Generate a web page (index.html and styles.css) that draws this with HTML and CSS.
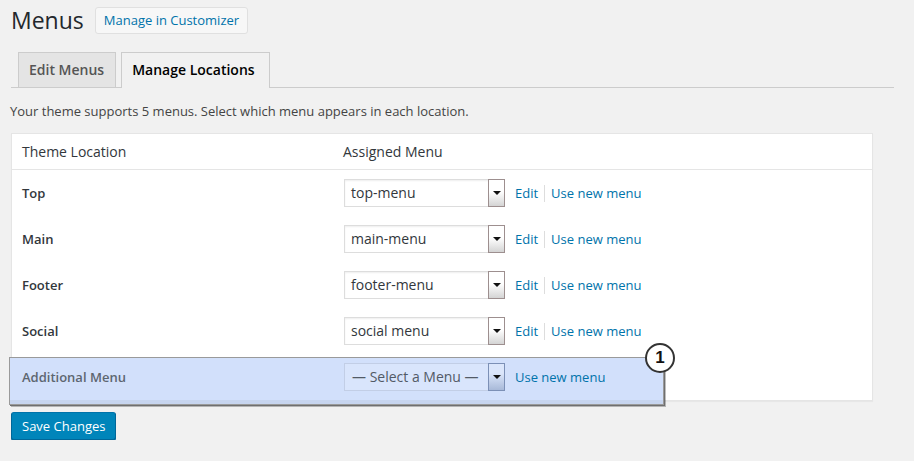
FILE: index.html
```html
<!DOCTYPE html>
<html>
<head>
<meta charset="utf-8">
<link rel="stylesheet" href="styles.css">
</head>
<body>
<div class="wrap">
  <div class="page-head">
    <h1 class="page-title">Menus</h1>
    <a class="btn-secondary">Manage in Customizer</a>
  </div>
  <div class="tabs">
    <a class="tab">Edit Menus</a>
    <a class="tab tab-active">Manage Locations</a>
  </div>
  <p class="desc">Your theme supports 5 menus. Select which menu appears in each location.</p>
  <div class="locations">
    <div class="row row-head">
      <div class="cell-name">Theme Location</div>
      <div class="cell-menu">Assigned Menu</div>
    </div>
    <div class="row">
      <div class="cell-name label">Top</div>
      <div class="cell-menu">
        <div class="select"><span class="select-text">top-menu</span><span class="select-arrow"></span></div>
        <a class="link">Edit</a><span class="sep"></span><a class="link">Use new menu</a>
      </div>
    </div>
    <div class="row">
      <div class="cell-name label">Main</div>
      <div class="cell-menu">
        <div class="select"><span class="select-text">main-menu</span><span class="select-arrow"></span></div>
        <a class="link">Edit</a><span class="sep"></span><a class="link">Use new menu</a>
      </div>
    </div>
    <div class="row">
      <div class="cell-name label">Footer</div>
      <div class="cell-menu">
        <div class="select"><span class="select-text">footer-menu</span><span class="select-arrow"></span></div>
        <a class="link">Edit</a><span class="sep"></span><a class="link">Use new menu</a>
      </div>
    </div>
    <div class="row">
      <div class="cell-name label">Social</div>
      <div class="cell-menu">
        <div class="select"><span class="select-text">social menu</span><span class="select-arrow"></span></div>
        <a class="link">Edit</a><span class="sep"></span><a class="link">Use new menu</a>
      </div>
    </div>
    <div class="row row-highlight">
      <div class="cell-name label">Additional Menu</div>
      <div class="cell-menu">
        <div class="select"><span class="select-text">— Select a Menu —</span><span class="select-arrow"></span></div>
        <a class="link">Use new menu</a>
      </div>
      <span class="badge">1</span>
    </div>
  </div>
  <a class="btn-primary">Save Changes</a>
</div>
</body>
</html>
```
FILE: styles.css
```css
html, body {
  margin: 0;
  padding: 0;
}
body {
  background: #f1f1f1;
  font-family: "Open Sans", "Liberation Sans", sans-serif;
  color: #444;
  font-size: 13px;
}
.wrap {
  padding: 7px 20px 0 11px;
}
.page-head {
  display: flex;
  align-items: center;
  height: 27px;
}
.page-title {
  margin: 0 11px 0 0;
  font-size: 23px;
  font-weight: 400;
  line-height: 27px;
  color: #23282d;
}
.btn-secondary {
  display: inline-block;
  box-sizing: border-box;
  height: 27px;
  line-height: 25px;
  padding: 0 8px;
  font-size: 13px;
  font-weight: 400;
  color: #0073aa;
  background: #f7f7f7;
  border: 1px solid #e0e0e0;
  border-radius: 3px;
}
.tabs {
  display: flex;
  margin-top: 18px;
  padding-left: 7px;
  border-bottom: 1px solid #ccc;
  height: 35px;
}
.tab {
  display: block;
  margin-right: 5px;
  padding: 5px 11px 5px 10px;
  font-size: 14px;
  font-weight: 600;
  line-height: 24px;
  color: #555;
  background: #e4e4e4;
  border: 1px solid #ccc;
  border-bottom: none;
}
.tab-active {
  background: #f1f1f1;
  color: #000;
  box-sizing: border-box;
  margin-bottom: -1px;
  height: 36px;
  padding-right: 14px;
}
.desc {
  margin: 13px 0 12px -1px;
  line-height: 20px;
  font-size: 13px;
  color: #444;
}
.locations {
  margin-right: 21px;
  background: #fff;
  border: 1px solid #e5e5e5;
  box-shadow: 0 1px 1px rgba(0,0,0,.04);
}
.row {
  display: grid;
  grid-template-columns: 322px 1fr;
  align-items: center;
  height: 46px;
  padding: 0 10px;
}
.row-head {
  height: 35px;
  border-bottom: 1px solid #e5e5e5;
  font-size: 14px;
  color: #32373c;
}
.row-head .cell-menu {
  margin-left: -1px;
}
.label {
  font-weight: 600;
  font-size: 13px;
  color: #32373c;
}
.cell-menu {
  display: flex;
  align-items: center;
}
.select {
  display: flex;
  box-sizing: border-box;
  width: 161px;
  height: 28px;
  border: 1px solid #ddd;
  box-shadow: inset 0 1px 2px rgba(0,0,0,.07);
  background: #fff;
  margin-right: 10px;
}
.select-text {
  flex: 1;
  padding-left: 6px;
  font-size: 14px;
  line-height: 26px;
  color: #32373c;
}
.select-arrow {
  position: relative;
  width: 15px;
  margin: -1px -1px -1px 0;
  border: 1px solid #9d8f8f;
  background: linear-gradient(#fff 45%, #d4d4d4 100%);
}
.select-arrow::after {
  content: "";
  position: absolute;
  left: 4px;
  top: 11px;
  border-left: 4px solid transparent;
  border-right: 4px solid transparent;
  border-top: 4px solid #111;
}
.link {
  color: #0073aa;
  font-size: 13px;
}
.sep {
  display: inline-block;
  width: 1px;
  height: 17px;
  background: #ddd;
  margin: 0 6px;
}
.row-highlight {
  position: relative;
  box-sizing: border-box;
  height: 48px;
  margin: 3px 208px -5px -3px;
  padding: 5px 0 13px 12px;
  grid-template-columns: 322px 1fr;
  align-items: center;
  background: #d2e0fb;
  border: 1px solid #9a9a9a;
  box-shadow: inset 0 -4px 0 #c7d5ef, 1px 1px 0 #6f6f6f, 2px 2px 0 rgba(0,0,0,.25);
}
.row-highlight .label {
  color: #5d6670;
}
.row-highlight .select {
  background: #d9e5fc;
  border-color: #c2cee6;
  box-shadow: none;
}
.row-highlight .select-text {
  color: #525a66;
  padding-left: 7px;
}
.row-highlight .select-arrow {
  border-color: #7c90b6;
  background: linear-gradient(#dbe6fb 35%, #a8b9d8 100%);
}
.badge {
  position: absolute;
  left: 635px;
  top: -15px;
  box-sizing: border-box;
  width: 30px;
  height: 30px;
  border-radius: 50%;
  border: 2px solid #333;
  background: #fff;
  font-family: "Liberation Sans", Arial, sans-serif;
  font-weight: 700;
  font-size: 17px;
  line-height: 26px;
  text-align: center;
  color: #111;
}
.btn-primary {
  display: inline-block;
  box-sizing: border-box;
  margin-top: 11px;
  height: 28px;
  line-height: 26px;
  padding: 0 10px;
  font-size: 13px;
  color: #fff;
  background: #0085ba;
  border: 1px solid #0073aa;
  border-color: #0073aa #006799 #006799;
  border-radius: 3px;
  box-shadow: 0 1px 0 #006799;
}
```
